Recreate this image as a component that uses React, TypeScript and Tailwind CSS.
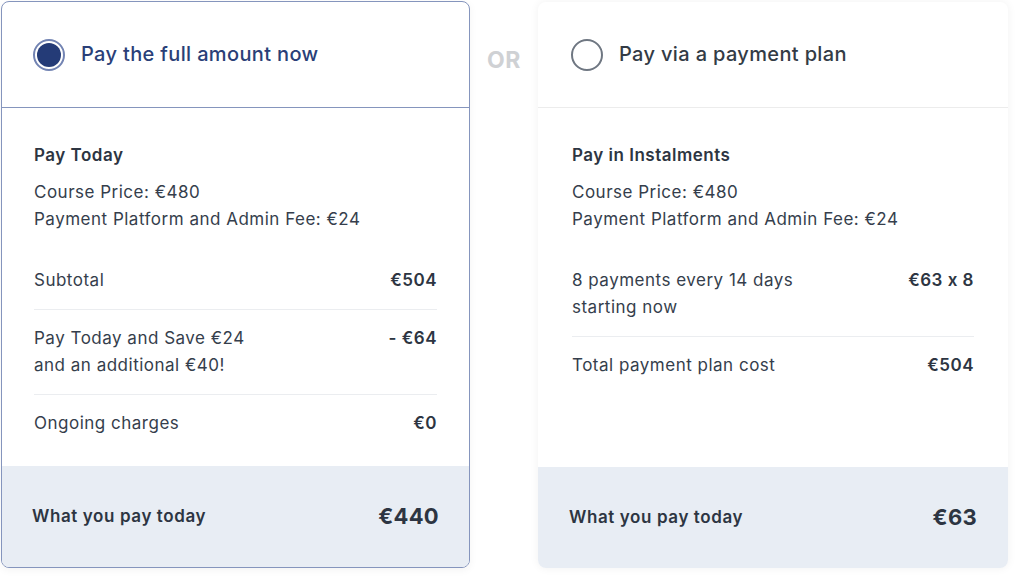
import React from "react";

const font = { fontFamily: "Inter, 'Open Sans', sans-serif" };

function Row({ left, right, last }: { left: React.ReactNode; right: string; last?: boolean }) {
  return (
    <div className={`flex justify-between py-[15px] ${last ? "" : "border-b border-[#ebedf0]"}`}>
      <div>{left}</div>
      <div className="font-semibold text-[#2d3542]">{right}</div>
    </div>
  );
}

export default function App() {
  return (
    <div className="w-[1024px] h-[576px] bg-white flex items-start pl-px pt-px text-[17px] leading-[27px] text-[#353e4c] tracking-[0.5px]" style={font}>
      {/* Left card */}
      <div className="w-[469px] flex flex-col rounded-lg border border-[#8595bd] bg-white overflow-hidden shadow-[0_2px_8px_rgba(0,0,0,0.05)]">
        <div className="h-[106px] flex items-center pl-[31px] gap-[16px] border-b border-[#8595bd]">
          <div className="w-[32px] h-[32px] rounded-full border-2 border-[#7384b3] flex items-center justify-center">
            <div className="w-[24px] h-[24px] rounded-full bg-[#243b77]" />
          </div>
          <div className="text-[20px] font-medium text-[#2a3f78] tracking-[0.35px] -mt-px">Pay the full amount now</div>
        </div>
        <div className="px-[32px] pt-[34px] pb-[14px]">
          <div className="font-semibold text-[#2d3542] mb-[10px]">Pay Today</div>
          <div>Course Price: €480</div>
          <div>Payment Platform and Admin Fee: €24</div>
          <div className="mt-[19px]">
            <Row left="Subtotal" right="€504" />
            <Row left={<>Pay Today and Save €24<br />and an additional €40!</>} right="- €64" />
            <Row left="Ongoing charges" right="€0" last />
          </div>
        </div>
        <div className="h-[101px] bg-[#e8edf4] flex items-center justify-between px-[30px]">
          <div className="font-semibold text-[#2d3542] tracking-[0.6px]">What you pay today</div>
          <div className="font-bold text-[22px] text-[#2d3542] tracking-[0.3px]">€440</div>
        </div>
      </div>

      {/* OR */}
      <div className="w-[68px] h-[118px] flex items-center justify-center text-[23px] font-bold text-[#cfd1d4] tracking-[0.5px]">OR</div>

      {/* Right card */}
      <div className="w-[470px] self-stretch mb-[8px] mt-px flex flex-col rounded-lg bg-white overflow-hidden shadow-[0_0_10px_rgba(0,0,0,0.06)]">
        <div className="h-[106px] flex items-center pl-[33px] gap-[16px] border-b border-[#ececec]">
          <div className="w-[32px] h-[32px] rounded-full border-2 border-[#6f7782]" />
          <div className="text-[20px] font-medium text-[#333b45] tracking-[0.35px] -mt-px">Pay via a payment plan</div>
        </div>
        <div className="flex-1 px-[34px] pt-[34px] pb-[14px]">
          <div className="font-semibold text-[#2d3542] mb-[10px]">Pay in Instalments</div>
          <div>Course Price: €480</div>
          <div>Payment Platform and Admin Fee: €24</div>
          <div className="mt-[19px]">
            <Row left={<>8 payments every 14 days<br />starting now</>} right="€63 x 8" />
            <Row left="Total payment plan cost" right="€504" last />
          </div>
        </div>
        <div className="h-[101px] bg-[#e8edf4] flex items-center justify-between pl-[31px] pr-[31px]">
          <div className="font-semibold text-[#2d3542] tracking-[0.6px]">What you pay today</div>
          <div className="font-bold text-[22px] text-[#2d3542] tracking-[0.3px]">€63</div>
        </div>
      </div>
    </div>
  );
}
